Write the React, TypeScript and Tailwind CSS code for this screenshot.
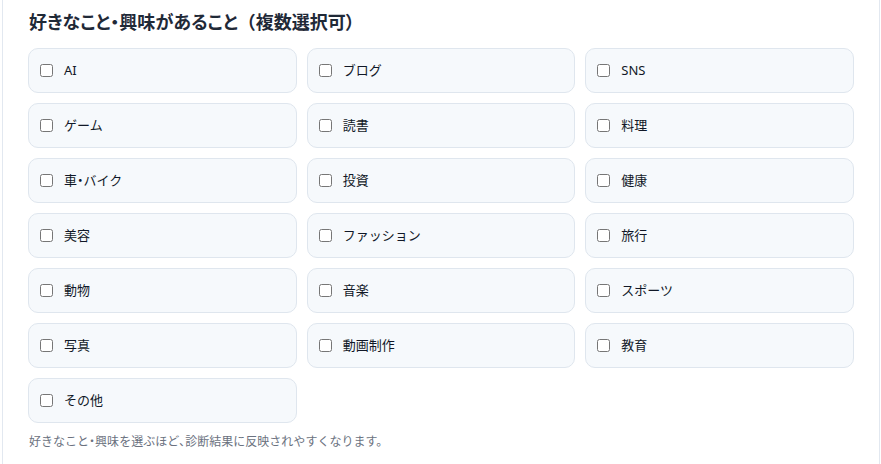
import React, { useState } from 'react';

const options = [
  'AI', 'ブログ', 'SNS',
  'ゲーム', '読書', '料理',
  '車・バイク', '投資', '健康',
  '美容', 'ファッション', '旅行',
  '動物', '音楽', 'スポーツ',
  '写真', '動画制作', '教育',
  'その他',
];

// punctuation is set half-width, like the reference UI font
const Tight: React.FC<{ text: string; chars?: string }> = ({ text, chars = '・、' }) => (
  <>
    {Array.from(text).map((ch, i) =>
      chars.includes(ch) ? (
        <span key={i} className="[font-feature-settings:'palt']">{ch}</span>
      ) : (
        <React.Fragment key={i}>{ch}</React.Fragment>
      )
    )}
  </>
);

const App: React.FC = () => {
  const [checked, setChecked] = useState<string[]>([]);

  const toggle = (name: string) => {
    setChecked(prev => (prev.includes(name) ? prev.filter(n => n !== name) : [...prev, name]));
  };

  return (
    <div
      className="min-h-[464px] bg-white"
      style={{ fontFamily: '"Noto Sans", "Noto Sans CJK JP", sans-serif' }}
    >
      <div className="ml-[2px] w-[878px] min-h-[464px] border-x border-[#e2e8f0] px-[25px] pt-[9px] pb-4">
        {/* Section title */}
        <h2 className="text-[18px] leading-[26px] font-bold text-[#1f2937] pl-[1px]">
          <span className="[font-feature-settings:'palt']">好きなこと・興味があること</span>
          （<span className="[font-feature-settings:'palt']">複数選択可）</span>
        </h2>

        {/* Options grid */}
        <div className="mt-[13px] grid grid-cols-3 gap-x-[10px] gap-y-[10px]">
          {options.map(name => (
            <label
              key={name}
              className="h-[45px] flex items-center gap-[11px] pl-[11px] bg-[#f6f9fc] border border-[#dfe6ee] rounded-[10px] cursor-pointer"
            >
              <input
                type="checkbox"
                checked={checked.includes(name)}
                onChange={() => toggle(name)}
                className="w-[13px] h-[13px]"
              />
              <span className="text-[13px] text-[#111827]">
                <Tight text={name} />
              </span>
            </label>
          ))}
        </div>

        {/* Hint */}
        <p className="mt-[10px] pl-[1px] text-[12px] leading-[18px] text-[#6b7280]">
          <Tight text="好きなこと・興味を選ぶほど、診断結果に反映されやすくなります。" />
        </p>
      </div>
    </div>
  );
};

export default App;
